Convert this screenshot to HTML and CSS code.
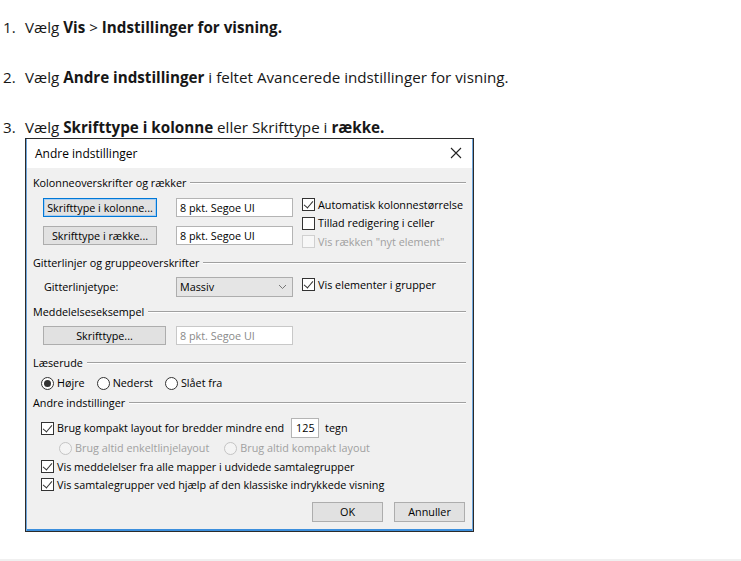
FILE: index.html
```html
<!DOCTYPE html>
<html lang="da">
<head>
    <meta charset="UTF-8">
    <title>Andre indstillinger</title>
    <link rel="stylesheet" href="styles.css">
</head>
<body>
    <ol class="steps">
        <li>Vælg <b>Vis</b> &gt; <b>Indstillinger for visning.</b></li>
        <li>Vælg <b>Andre indstillinger</b> i feltet Avancerede indstillinger for visning.</li>
        <li>Vælg <b>Skrifttype i kolonne</b> eller Skrifttype i <b>række.</b>
            <div class="dialog">
                <div class="titlebar">
                    <span>Andre indstillinger</span>
                    <svg class="close" width="12" height="12" viewBox="0 0 12 12">
                        <path d="M1 1 L11 11 M11 1 L1 11" stroke="#222" stroke-width="1.1" fill="none"/>
                    </svg>
                </div>
                <div class="dlg-body">
                    <!-- Kolonneoverskrifter -->
                    <div class="group-title first"><span>Kolonneoverskrifter og rækker</span></div>
                    <div class="group-row">
                        <div class="col-left">
                            <div class="line">
                                <div class="cell-btn"><span class="btn btn-default w114">Skrifttype i kolonne...</span></div>
                                <span class="textbox">8 pkt. Segoe UI</span>
                            </div>
                            <div class="line line-2">
                                <div class="cell-btn"><span class="btn w114">Skrifttype i række...</span></div>
                                <span class="textbox">8 pkt. Segoe UI</span>
                            </div>
                        </div>
                        <div class="col-right checks">
                            <label class="check"><span class="box checked"></span>Automatisk kolonnestørrelse</label>
                            <label class="check"><span class="box"></span>Tillad redigering i celler</label>
                            <label class="check disabled"><span class="box"></span>Vis rækken "nyt element"</label>
                        </div>
                    </div>

                    <!-- Gitterlinjer -->
                    <div class="group-title t-grid"><span>Gitterlinjer og gruppeoverskrifter</span></div>
                    <div class="group-row row-grid">
                        <div class="line">
                            <div class="cell-btn"><span class="field-label">Gitterlinjetype:</span></div>
                            <span class="select">Massiv
                                <svg class="chev" width="9" height="6" viewBox="0 0 9 6"><path d="M1 1 L4.5 4.5 L8 1" stroke="#777" fill="none"/></svg>
                            </span>
                        </div>
                        <div class="col-right">
                            <label class="check"><span class="box checked"></span>Vis elementer i grupper</label>
                        </div>
                    </div>

                    <!-- Meddelelseseksempel -->
                    <div class="group-title t-sample"><span>Meddelelseseksempel</span></div>
                    <div class="group-row row-sample">
                        <div class="line">
                            <div class="cell-btn"><span class="btn w123">Skrifttype...</span></div>
                            <span class="textbox muted">8 pkt. Segoe UI</span>
                        </div>
                    </div>

                    <!-- Læserude -->
                    <div class="group-title t-pane"><span>Læserude</span></div>
                    <div class="radios">
                        <label class="radio"><span class="dot on"></span>Højre</label>
                        <label class="radio"><span class="dot"></span>Nederst</label>
                        <label class="radio"><span class="dot"></span>Slået fra</label>
                    </div>

                    <!-- Andre indstillinger -->
                    <div class="group-title t-other"><span>Andre indstillinger</span></div>
                    <div class="other">
                        <div class="check-line">
                            <label class="check"><span class="box checked"></span>Brug kompakt layout for bredder mindre end</label>
                            <span class="textbox small">125</span>
                            <span class="unit">tegn</span>
                        </div>
                        <div class="radios sub">
                            <label class="radio disabled"><span class="dot"></span>Brug altid enkeltlinjelayout</label>
                            <label class="radio disabled"><span class="dot"></span>Brug altid kompakt layout</label>
                        </div>
                        <label class="check c-mail"><span class="box checked"></span>Vis meddelelser fra alle mapper i udvidede samtalegrupper</label>
                        <label class="check c-conv"><span class="box checked"></span>Vis samtalegrupper ved hjælp af den klassiske indrykkede visning</label>
                    </div>

                    <div class="actions">
                        <span class="btn w71">OK</span>
                        <span class="btn w71">Annuller</span>
                    </div>
                </div>
            </div>
        </li>
    </ol>
    <div class="page-end"></div>
</body>
</html>
```

FILE: styles.css
```css
body {
    margin: 0;
    padding: 0;
    background-color: #ffffff;
    color: #171717;
    font-family: "Open Sans", "Noto Sans", sans-serif;
    font-size: 15.2px;
}
.steps {
    margin: 0;
    padding: 16px 0 0 25px;
    height: 559px;
    box-sizing: border-box;
    list-style: none;
    counter-reset: step;
}
.steps li {
    line-height: 22px;
    margin-bottom: 28px;
    counter-increment: step;
}
.steps li::before {
    content: counter(step) ".";
    display: inline-block;
    width: 22px;
    margin-left: -22px;
}
.steps li:last-child {
    margin-bottom: 0;
}
.steps b {
    font-weight: 700;
}
.page-end {
    height: 2px;
    background: #f0f0f0;
}

/* Dialog */
.dialog {
    width: 449px;
    height: 394px;
    margin: 0 0 0 0;
    box-sizing: border-box;
    border: 1px solid #2b2b2b;
    box-shadow: inset 1px 0 0 #6fa6dc, inset -1px 0 0 #6fa6dc, inset 0 -2px 0 #3c8fdd;
    background: #f0f0f0;
    color: #000;
    font-size: 10.8px;
    line-height: 14px;
    display: flex;
    flex-direction: column;
}
.titlebar {
    height: 29px;
    background: #fff;
    display: flex;
    align-items: center;
    justify-content: space-between;
    padding: 0 10px 0 8px;
    margin: 0 1px;
    font-size: 12px;
}
.close {
    display: block;
    margin-top: -1px;
}
.dlg-body {
    padding: 8px 7px 0 7px;
    flex: 1;
}
.group-title {
    display: flex;
    align-items: center;
    height: 14px;
}
.group-title::after {
    content: '';
    flex: 1;
    height: 0;
    border-top: 1px solid #a0a0a0;
    border-bottom: 1px solid #fff;
    margin-left: 4px;
}
.t-grid { margin-top: 8px; }
.t-sample { margin-top: 8px; }
.t-pane { margin-top: 11px; }
.t-other { margin-top: 6px; }
.group-row {
    display: flex;
    padding-left: 10px;
    margin-top: 8px;
}
.col-left {
    width: 259px;
}
.line {
    display: flex;
    align-items: center;
    height: 19px;
}
.line-2 {
    margin-top: 9px;
}
.cell-btn {
    width: 133px;
    flex: none;
}
.btn {
    display: inline-flex;
    align-items: center;
    justify-content: center;
    height: 19px;
    box-sizing: border-box;
    border: 1px solid #adadad;
    background: #e1e1e1;
}
.btn-default {
    border-color: #0078d7;
    box-shadow: inset 0 0 0 1px #a8cdf0;
}
.w114 { width: 114px; }
.w123 { width: 123px; }
.w71 { width: 71px; height: 20px; }
.textbox {
    display: inline-flex;
    align-items: center;
    width: 117px;
    height: 19px;
    box-sizing: border-box;
    padding-left: 3px;
    border: 1px solid #b4b4b4;
    background: #fff;
}
.textbox.muted {
    color: #8a8a8a;
    border-color: #c8c8c8;
}
.textbox.small {
    width: 28px;
    height: 20px;
    padding-left: 4px;
    margin-left: 7px;
}
.field-label {
    padding-left: 1px;
}
.select {
    display: inline-flex;
    align-items: center;
    justify-content: space-between;
    width: 117px;
    height: 20px;
    box-sizing: border-box;
    padding: 0 5px 0 3px;
    border: 1px solid #adadad;
    background: #e5e5e5;
}
.col-right {
    display: flex;
    flex-direction: column;
}
.checks {
    gap: 5.5px;
}
.check {
    display: flex;
    align-items: center;
    height: 13px;
    white-space: nowrap;
}
.box {
    width: 13px;
    height: 13px;
    box-sizing: border-box;
    border: 1px solid #333;
    background: #fff;
    margin-right: 3px;
    flex: none;
    position: relative;
}
.box.checked::after {
    content: '';
    position: absolute;
    left: 3px;
    top: 0px;
    width: 4px;
    height: 8px;
    border: solid #333;
    border-width: 0 1px 1px 0;
    transform: rotate(40deg);
}
.check.disabled {
    color: #a0a0a0;
}
.check.disabled .box {
    border-color: #d0d0d0;
    background: #f7f7f7;
}
.row-grid {
    margin-top: 7px;
}
.row-grid .col-right {
    padding-top: 1px;
}
.row-grid .line {
    width: 259px;
    height: 20px;
}
.row-sample {
    margin-top: 7px;
}
.radios {
    display: flex;
    align-items: center;
    height: 14px;
    margin: 6px 0 0 8px;
}
.radio {
    display: flex;
    align-items: center;
    margin-right: 12px;
    white-space: nowrap;
}
.dot {
    width: 13px;
    height: 13px;
    box-sizing: border-box;
    border: 1px solid #333;
    border-radius: 50%;
    background: #fff;
    margin-right: 3px;
    position: relative;
}
.dot.on::after {
    content: '';
    position: absolute;
    left: 2px;
    top: 2px;
    width: 7px;
    height: 7px;
    border-radius: 50%;
    background: #333;
}
.radio.disabled {
    color: #a0a0a0;
    margin-right: 15px;
}
.radio.disabled .dot {
    border-color: #c4c4c4;
    background: #f4f4f4;
}
.other {
    padding-left: 8px;
    display: flex;
    flex-direction: column;
    margin-top: 8px;
}
.check-line {
    display: flex;
    align-items: center;
    height: 20px;
}
.unit {
    margin-left: 6px;
}
.radios.sub {
    margin: 3px 0 0 18px;
    height: 14px;
}
.c-mail { margin-top: 5px; }
.c-conv { margin-top: 5px; }
.actions {
    display: flex;
    justify-content: flex-end;
    gap: 11px;
    margin-top: 11px;
    padding-right: 1px;
}
```
